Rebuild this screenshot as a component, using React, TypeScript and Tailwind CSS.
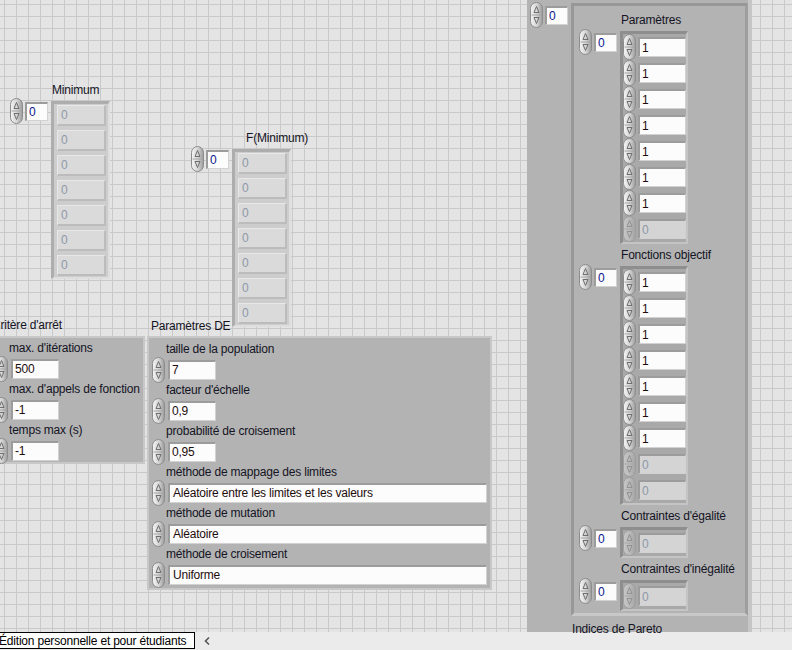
import React from "react";

const LBL = "text-[12px] leading-[14px] text-[#141424] whitespace-nowrap";

function Spinner({ dim = false }: { dim?: boolean }) {
  return (
    <svg width="13" height="26" viewBox="0 0 13 26" className={dim ? "shrink-0 opacity-40" : "shrink-0"}>
      <defs>
        <linearGradient id="spg" x1="0" y1="0" x2="1" y2="0">
          <stop offset="0" stopColor="#f6f6f6" />
          <stop offset="0.55" stopColor="#d2d2d2" />
          <stop offset="1" stopColor="#9a9a9a" />
        </linearGradient>
      </defs>
      <rect x="0.5" y="0.5" width="12" height="25" rx="6" fill="url(#spg)" stroke="#8c8c8c" />
      <line x1="1.5" y1="13" x2="11.5" y2="13" stroke="#a4a4a4" />
      <path d="M4 10.5 L6.5 4.5 L9 10.5 Z" fill="none" stroke="#6e6e6e" />
      <path d="M4 15.5 L9 15.5 L6.5 21.5 Z" fill="none" stroke="#6e6e6e" />
    </svg>
  );
}

function NumBox({ value, index = false, dim = false, className = "" }: { value: string; index?: boolean; dim?: boolean; className?: string }) {
  const tone = dim ? "bg-[#d4d4d4] text-[#8e98a8]" : index ? "bg-[#fcfcfc] text-[#0d168c]" : "bg-[#fcfcfc] text-[#1e0c0c]";
  return (
    <div
      className={`${tone} ${className} shrink-0 border-t-2 border-l-2 border-r border-b border-t-[#9c9c9c] border-l-[#9c9c9c] border-r-[#d2d2d2] border-b-[#d2d2d2] pl-[2px] flex items-center text-[12px] leading-[14px] whitespace-nowrap overflow-hidden`}
    >
      {value}
    </div>
  );
}

function IndexCtl() {
  return (
    <div className="flex items-center gap-[2px] h-[26px]">
      <Spinner />
      <NumBox value="0" index className="w-[23px] h-[19px]" />
    </div>
  );
}

function IndicatorArray({ n }: { n: number }) {
  return (
    <div className="w-[59px] bg-[#cdcdcd] border-t-[3px] border-l-[3px] border-r-2 border-b-2 border-t-[#adadad] border-l-[#adadad] border-r-[#dedede] border-b-[#dedede] pl-[3px] py-[1px] flex flex-col gap-[4px]">
      {Array.from({ length: n }).map((_, i) => (
        <div
          key={i}
          className="w-[49px] h-[21px] bg-[#dadada] border-t border-l border-t-[#e8e8e8] border-l-[#e8e8e8] border-r-2 border-b-2 border-r-[#bcbcbc] border-b-[#bcbcbc] pl-[3px] flex items-center text-[12px] text-[#8e98a8]"
        >
          0
        </div>
      ))}
    </div>
  );
}

function CtlArray({ vals }: { vals: { v: string; dim?: boolean }[] }) {
  return (
    <div className="w-[68px] bg-[#a9a9a9] border-t-[3px] border-l-[3px] border-r-2 border-b-2 border-t-[#8e8e8e] border-l-[#8e8e8e] border-r-[#c4c4c4] border-b-[#c4c4c4] flex flex-col">
      {vals.map((e, i) => (
        <div key={i} className="flex items-center gap-[2px] h-[26px]">
          <Spinner dim={e.dim} />
          <NumBox value={e.v} dim={e.dim} className="w-[48px] h-[20px]" />
        </div>
      ))}
    </div>
  );
}

function SubArray({ label, vals, className = "" }: { label: string; vals: { v: string; dim?: boolean }[]; className?: string }) {
  return (
    <div className={`flex flex-col ${className}`}>
      <div className={`${LBL} ml-[42px]`}>{label}</div>
      <div className="flex items-start gap-[3px] mt-[4px]">
        <div className="-mt-[2px]">
          <IndexCtl />
        </div>
        <CtlArray vals={vals} />
      </div>
    </div>
  );
}

function NumItem({ label, value }: { label: string; value: string }) {
  return (
    <div className="flex flex-col">
      <div className={`${LBL} ml-[14px]`}>{label}</div>
      <div className="flex items-center h-[27px]">
        <Spinner />
        <NumBox value={value} className="w-[48px] h-[20px] ml-[3px]" />
      </div>
    </div>
  );
}

function RingItem({ label, value }: { label: string; value: string }) {
  return (
    <div className="flex flex-col">
      <div className={`${LBL} ml-[14px]`}>{label}</div>
      <div className="flex items-center h-[27px]">
        <Spinner />
        <NumBox value={value} className="w-[319px] h-[20px] ml-[3px] pl-[3px]" />
      </div>
    </div>
  );
}

const ones = (n: number, d: number) => [
  ...Array.from({ length: n }, () => ({ v: "1" })),
  ...Array.from({ length: d }, () => ({ v: "0", dim: true })),
];

export default function App() {
  return (
    <div className="w-[792px] h-[650px] overflow-hidden flex flex-col font-['Liberation_Sans',Arial,sans-serif] text-[12px] tracking-[-0.2px]">
      <div className="relative flex-1 bg-[#e4e4e4] bg-[linear-gradient(to_right,#c9c9c9_1px,transparent_1px),linear-gradient(to_bottom,#c9c9c9_1px,transparent_1px)] bg-[size:12px_12px] bg-[position:4px_4px]">
        {/* Minimum */}
        <div className="absolute left-[10px] top-[83px] flex flex-col">
          <div className={`${LBL} ml-[42px]`}>Minimum</div>
          <div className="flex items-start gap-[3px] mt-[4px]">
            <div className="-mt-[3px]">
              <IndexCtl />
            </div>
            <IndicatorArray n={7} />
          </div>
        </div>

        {/* F(Minimum) */}
        <div className="absolute left-[191px] top-[131px] flex flex-col">
          <div className={`${LBL} ml-[55px]`}>F(Minimum)</div>
          <div className="flex items-start gap-[3px] mt-[4px]">
            <div className="-mt-[3px]">
              <IndexCtl />
            </div>
            <IndicatorArray n={7} />
          </div>
        </div>

        {/* Critère d'arrêt */}
        <div className={`${LBL} absolute left-[-8px] top-[318px]`}>Critère d'arrêt</div>
        <div className="absolute left-[-20px] top-[336px] w-[165px] h-[128px] bg-[#b3b3b3] border-2 border-[#c8c8c8] pl-[13px] pt-[3px] flex flex-col">
          <NumItem label="max. d'itérations" value="500" />
          <NumItem label="max. d'appels de fonction" value="-1" />
          <NumItem label="temps max (s)" value="-1" />
        </div>

        {/* Paramètres DE */}
        <div className={`${LBL} absolute left-[151px] top-[319px]`}>Paramètres DE</div>
        <div className="absolute left-[147px] top-[336px] w-[345px] h-[254px] bg-[#b3b3b3] border-2 border-[#c8c8c8] pl-[3px] pt-[4px] flex flex-col">
          <NumItem label="taille de la population" value="7" />
          <NumItem label="facteur d'échelle" value="0,9" />
          <NumItem label="probabilité de croisement" value="0,95" />
          <RingItem label="méthode de mappage des limites" value="Aléatoire entre les limites et les valeurs" />
          <RingItem label="méthode de mutation" value="Aléatoire" />
          <RingItem label="méthode de croisement" value="Uniforme" />
        </div>

        {/* Pareto array */}
        <div className="absolute left-[527px] top-0 w-[225px] h-[632px] bg-[#b3b3b3] border-r-4 border-r-[#c6c6c6] flex flex-col">
          <div className="flex items-start pl-[3px] gap-[3px]">
            <div className="mt-[2px]">
              <IndexCtl />
            </div>
            <div className="mt-[3px] w-[177px] bg-[#b3b3b3] border-[3px] border-t-[#989898] border-l-[#989898] border-r-[#9e9e9e] border-b-[#c8c8c8] pl-[5px] pt-[7px] pb-[2px] flex flex-col">
              <SubArray label="Paramètres" vals={ones(7, 1)} />
              <SubArray label="Fonctions objectif" vals={ones(7, 2)} className="mt-[4px]" />
              <SubArray label="Contraintes d'égalité" vals={[{ v: "0", dim: true }]} className="mt-[4px]" />
              <SubArray label="Contraintes d'inégalité" vals={[{ v: "0", dim: true }]} className="mt-[4px]" />
            </div>
          </div>
          <div className={`${LBL} ml-[45px] mt-[6px]`}>Indices de Pareto</div>
        </div>
      </div>

      {/* status bar */}
      <div className="h-[18px] bg-[#ebebeb] flex items-start">
        <div className="h-[17px] bg-white border border-black flex items-center -ml-[2px] w-[197px] text-[12px] leading-[14px] text-black whitespace-nowrap overflow-hidden">
          Édition personnelle et pour étudiants
        </div>
        <svg width="8" height="10" viewBox="0 0 8 10" className="ml-[8px] mt-[4px]">
          <path d="M6 1.5 L2.5 5 L6 8.5" fill="none" stroke="#555" strokeWidth="1.6" />
        </svg>
      </div>
    </div>
  );
}
